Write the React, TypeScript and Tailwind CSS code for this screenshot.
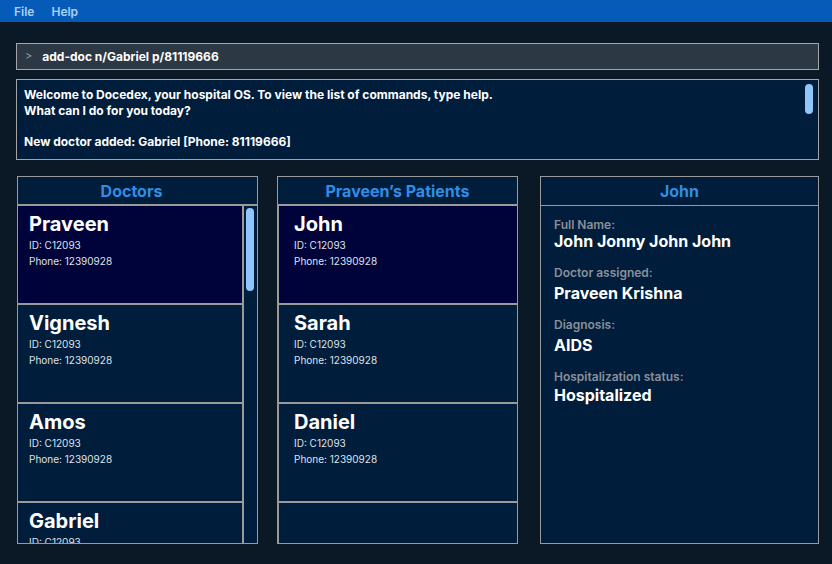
import React from "react";

const doctors = [
  { name: "Praveen", selected: true },
  { name: "Vignesh" },
  { name: "Amos" },
  { name: "Gabriel" },
];
const patients = [
  { name: "John", selected: true },
  { name: "Sarah" },
  { name: "Daniel" },
];

function Card({ name, selected, pl }: { name: string; selected?: boolean; pl: string }) {
  return (
    <div
      className={`h-[99px] shrink-0 border-b-2 border-[#9a9a9a] ${pl} pt-[6px] ${
        selected ? "bg-[#00033a]" : "bg-[#001d3b]"
      }`}
    >
      <div className="text-[20px] font-bold leading-[24px] text-white">{name}</div>
      <div className="mt-[2px] text-[10px] leading-[14px] text-[#dfe3ea]">ID: C12093</div>
      <div className="mt-[2px] text-[10px] leading-[14px] text-[#dfe3ea]">Phone: 12390928</div>
    </div>
  );
}

export default function App() {
  return (
    <div
      className="w-[832px] h-[564px] bg-[#0b1825] flex flex-col overflow-hidden"
      style={{ fontFamily: "Inter, 'Noto Sans', sans-serif" }}
    >
      <div className="h-[22px] bg-[#065bb9] flex items-center gap-[17px] pl-[14px] pt-[2px] text-[12px] font-semibold text-[#a9cff5]">
        <span>File</span>
        <span>Help</span>
      </div>

      <div className="mt-[21px] ml-[16px] w-[803px] h-[27px] bg-[#2c3843] border border-[#a4a4a4] flex items-center">
        <span className="ml-[8px] text-[11px] text-[#9a9a9a]">&gt;</span>
        <span className="ml-[10px] text-[12px] font-bold text-white">add-doc n/Gabriel p/81119666</span>
      </div>

      <div className="relative mt-[9px] ml-[16px] w-[803px] h-[81px] bg-[#001d3b] border border-[#a4a4a4] px-[7px] pt-[7px] text-[12px] font-bold leading-[15.5px] text-white">
        <div>Welcome to Docedex, your hospital OS. To view the list of commands, type help.</div>
        <div>What can I do for you today?</div>
        <div>&nbsp;</div>
        <div>New doctor added: Gabriel [Phone: 81119666]</div>
        <div className="absolute right-[5px] top-[4px] w-[8px] h-[30px] rounded-full bg-[#8fc6fb]" />
      </div>

      <div className="mt-[16px] flex">
        {/* Doctors */}
        <div className="ml-[17px] w-[241px] h-[368px] border border-[#9a9a9a] bg-[#001d3b] flex flex-col">
          <div className="h-[29px] shrink-0 border-b-2 border-[#9a9a9a] flex items-center justify-center pr-[12px] text-[16px] font-bold text-[#2f8ee6]">
            Doctors
          </div>
          <div className="flex flex-1 min-h-0">
            <div className="w-[226px] border-r-2 border-[#9a9a9a] flex flex-col overflow-hidden">
              {doctors.map((d) => (
                <Card key={d.name} name={d.name} selected={d.selected} pl="pl-[11px]" />
              ))}
            </div>
            <div className="flex-1 relative">
              <div className="absolute left-[2px] top-[2px] w-[8px] h-[83px] rounded-full bg-[#8fc6fb]" />
            </div>
          </div>
        </div>

        {/* Patients */}
        <div className="ml-[19px] w-[241px] h-[368px] border border-[#9a9a9a] bg-[#001d3b] flex flex-col">
          <div className="h-[29px] shrink-0 border-b-2 border-[#9a9a9a] flex items-center justify-center text-[16px] font-bold text-[#2f8ee6]">
            Praveen’s Patients
          </div>
          <div className="flex flex-col flex-1 border-l border-[#9a9a9a]">
            {patients.map((p) => (
              <Card key={p.name} name={p.name} selected={p.selected} pl="pl-[15px]" />
            ))}
          </div>
        </div>

        {/* Details */}
        <div className="ml-[22px] w-[279px] h-[368px] border border-[#9a9a9a] bg-[#001d3b] flex flex-col">
          <div className="h-[29px] shrink-0 border-b border-[#9a9a9a] flex items-center justify-center text-[16px] font-bold text-[#2f8ee6]">
            John
          </div>
          <div className="pl-[13px] pt-[12px] flex flex-col">
            <div className="text-[12px] font-semibold leading-[14px] text-[#8a9099]">Full Name:</div>
            <div className="-mt-[1px] text-[16px] font-bold leading-[20px] text-white">John Jonny John John</div>
            <div className="mt-[15px] text-[12px] font-semibold leading-[14px] text-[#8a9099]">Doctor assigned:</div>
            <div className="mt-[3px] text-[16px] font-bold leading-[20px] text-white">Praveen Krishna</div>
            <div className="mt-[15px] text-[12px] font-semibold leading-[14px] text-[#8a9099]">Diagnosis:</div>
            <div className="mt-[3px] text-[16px] font-bold leading-[20px] text-white">AIDS</div>
            <div className="mt-[15px] text-[12px] font-semibold leading-[14px] text-[#8a9099]">Hospitalization status:</div>
            <div className="mt-[1px] text-[16px] font-bold leading-[20px] text-white">Hospitalized</div>
          </div>
        </div>
      </div>
    </div>
  );
}
